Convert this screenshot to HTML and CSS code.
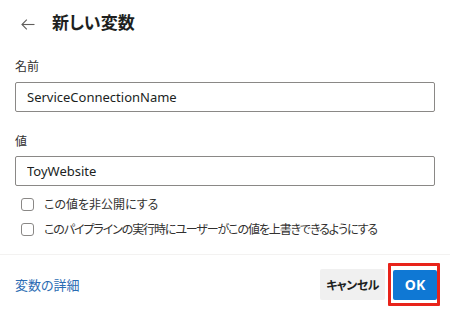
FILE: index.html
```html
<!DOCTYPE html>
<html lang="ja">
<head>
  <meta charset="UTF-8">
  <meta name="viewport" content="width=device-width, initial-scale=1.0">
  <title>新しい変数</title>
  <link rel="stylesheet" href="styles.css">
</head>
<body>
  <div class="dialog">
    <div class="dialog-body">
      <div class="header">
        <button class="back" aria-label="戻る">
          <svg width="14" height="11" viewBox="0 0 14 11" fill="none" stroke="#605e5c" stroke-width="1.1">
            <path d="M13.5 5.5H1"/>
            <path d="M5.8 0.7L1 5.5l4.8 4.8"/>
          </svg>
        </button>
        <h1>新しい変数</h1>
      </div>

      <div class="form-group first">
        <label for="name">名前</label>
        <input type="text" id="name" value="ServiceConnectionName">
      </div>
      <div class="form-group">
        <label for="value">値</label>
        <input type="text" id="value" value="ToyWebsite">
      </div>

      <label class="check-row">
        <span class="check"></span>
        <span>この値を非公開にする</span>
      </label>
      <label class="check-row">
        <span class="check"></span>
        <span class="tight">このパイプラインの実行時にユーザーがこの値を上書きできるようにする</span>
      </label>
    </div>

    <div class="footer">
      <a href="#">変数の詳細</a>
      <div class="actions">
        <button class="btn">キャンセル</button>
        <button class="btn primary">OK</button>
      </div>
    </div>
  </div>
</body>
</html>
```

FILE: styles.css
```css
* {
  margin: 0;
  padding: 0;
  box-sizing: border-box;
  font-family: 'Noto Sans', 'Noto Sans CJK JP', sans-serif;
  font-feature-settings: "palt";
}

body {
  background-color: white;
  color: #323130;
}

.dialog {
  width: 450px;
  height: 309px;
}

.dialog-body {
  padding: 0 15px;
}

.header {
  display: flex;
  align-items: center;
  height: 24px;
  margin-top: 11px;
}

.back {
  display: flex;
  background: none;
  border: none;
  margin-left: 6px;
  margin-right: 17px;
  margin-top: 3px;
}

h1 {
  font-size: 17px;
  font-weight: 700;
  color: #201f1e;
  line-height: 24px;
}

.form-group {
  margin-top: 21px;
}

.form-group.first {
  margin-top: 23px;
}

label {
  display: block;
  font-size: 12px;
  line-height: 18px;
  margin-bottom: 5px;
}

.form-group.first label {
  margin-bottom: 6px;
}

input {
  display: block;
  width: 100%;
  height: 30px;
  padding: 0 11px;
  border: 1px solid #8a8886;
  border-radius: 2px;
  font-size: 13px;
  color: #201f1e;
}

.check-row {
  display: flex;
  align-items: center;
  height: 25px;
  margin: 0;
  font-size: 12px;
  white-space: nowrap;
  color: #323130;
}

.check-row:first-of-type {
  margin-top: 6px;
}

.check {
  flex-shrink: 0;
  width: 13px;
  height: 13px;
  border: 1px solid #8a8886;
  border-radius: 3px;
  margin-left: 6px;
  margin-right: 10px;
}

.tight {
  letter-spacing: -1.1px;
}

.footer {
  margin-top: 12px;
  border-top: 1px solid #f3f2f1;
  padding: 14px 13px 0 15px;
  display: flex;
  justify-content: space-between;
  align-items: center;
}

a {
  color: #2b6cb3;
  text-decoration: none;
  font-size: 13px;
}

.actions {
  display: flex;
  align-items: center;
  gap: 8px;
}

.btn {
  height: 31px;
  padding: 0 6px;
  border: none;
  border-radius: 2px;
  background-color: #f0f0f0;
  color: #201f1e;
  font-size: 12px;
  font-weight: 600;
  letter-spacing: -0.5px;
  cursor: pointer;
}

.primary {
  position: relative;
  width: 44px;
  height: 30px;
  background-color: #0f78d4;
  color: white;
  font-size: 14px;
  font-weight: 700;
  letter-spacing: 0;
}

/* highlight frame drawn over the OK button */
.primary::after {
  content: "";
  position: absolute;
  left: -5px;
  right: -3px;
  top: -7px;
  bottom: -6px;
  border: 3px solid #e8231a;
  border-radius: 1px;
}
```
